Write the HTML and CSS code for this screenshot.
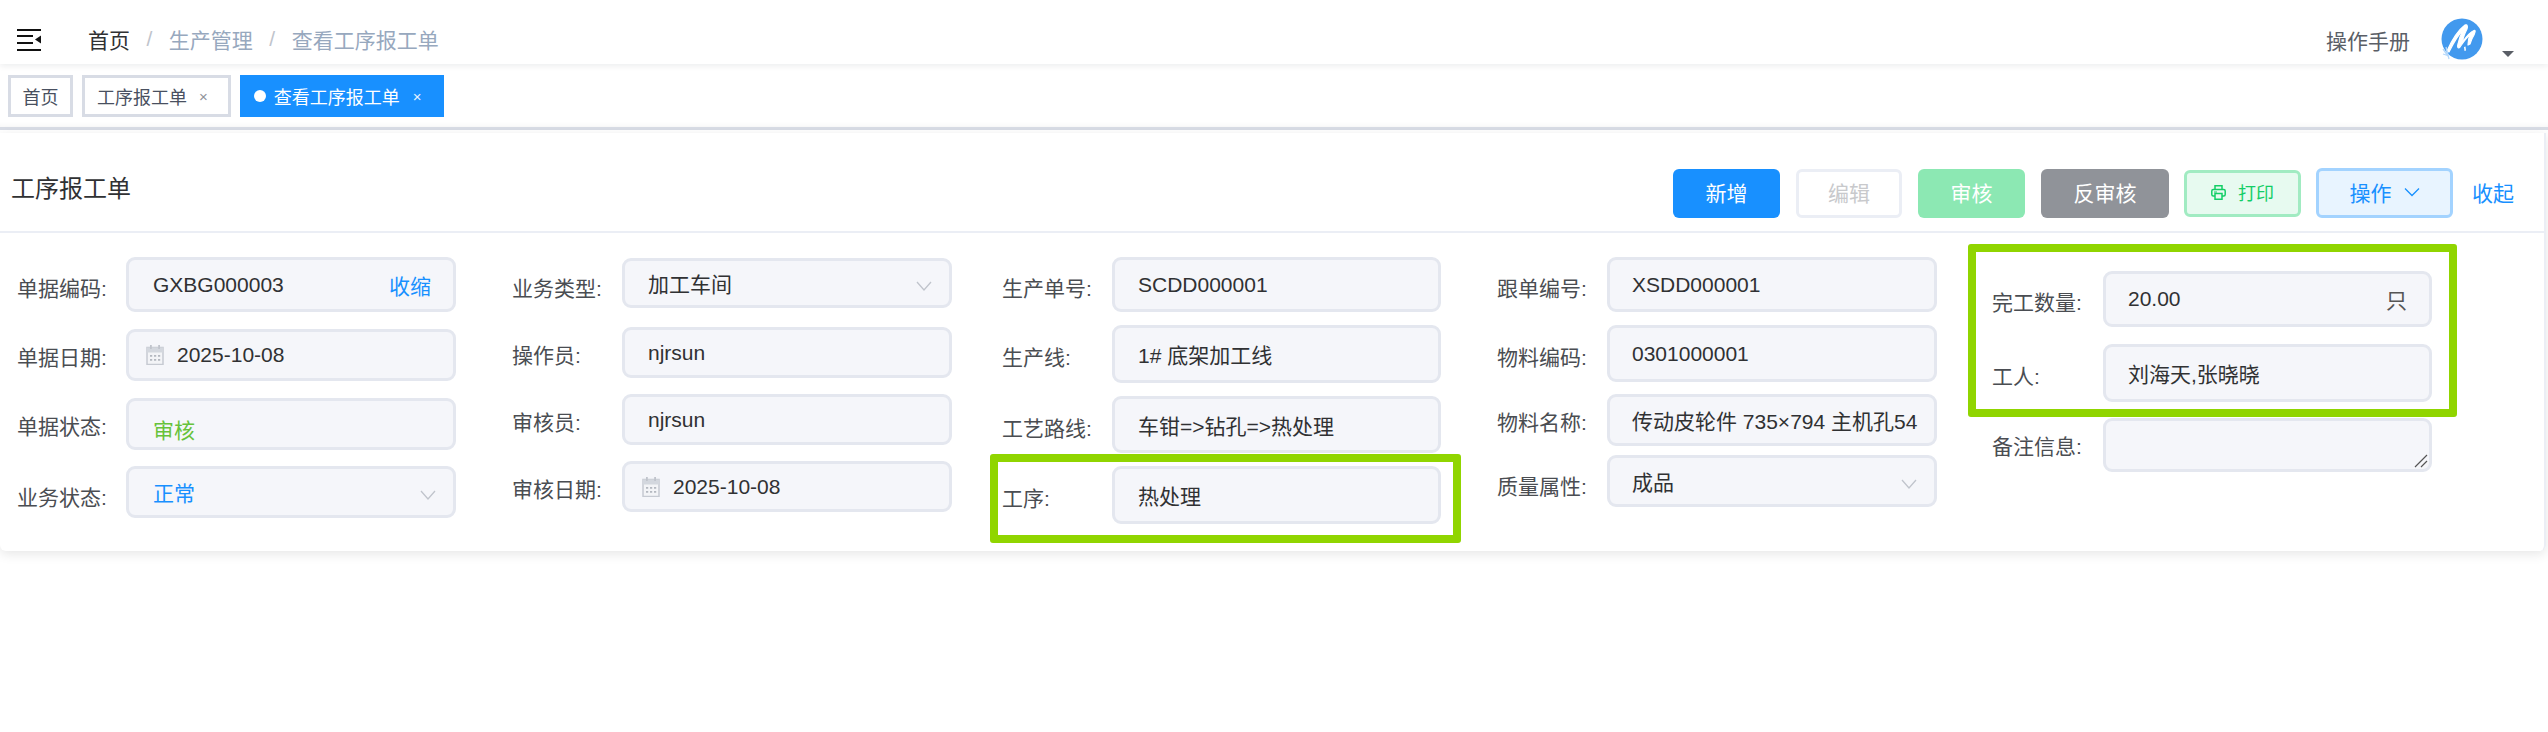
FILE: index.html
```html
<!DOCTYPE html>
<html lang="zh-CN">
<head>
<meta charset="utf-8">
<title>查看工序报工单</title>
<link rel="stylesheet" href="styles.css">
</head>
<body>
<header class="navbar">
  <svg class="hamburger" viewBox="0 0 24 22" aria-hidden="true">
    <path d="M0 0h24v2H0zM0 20h24v2H0zM0 6h16v2H0zM0 13h16v2H0z" fill="#111"/>
    <path d="M24 6.500v8l-6-4z" fill="#111"/>
  </svg>
  <nav class="crumbs">
    <span class="crumb-home">首页</span><span class="crumb-sep">/</span><span class="crumb">生产管理</span><span class="crumb-sep">/</span><span class="crumb">查看工序报工单</span>
  </nav>
  <div class="nav-right">
    <span class="manual">操作手册</span>
    <svg class="avatar" viewBox="0 0 42 42" aria-hidden="true">
      <circle cx="21" cy="21" r="20.500" fill="#4299ee"/>
      <path d="M6 33C10 24 16 13 24 7c2-1 3 1 2 4-2 4-4 8-4.500 13 3.500-5 7.500-10 11.500-11.500 2-.5 1 1.500 0 4.500-2 3-3 6-4 9l-2 1c0-5 1-8 2-10-4 3-8 9-10 12-2 2-3 0-2-3 1-5 3-10 5-14-5 5-10 14-14 22z" fill="#fff" stroke="#fff" stroke-width="1.200" stroke-linejoin="round"/>
      <path d="M23 29l1.500-.5.5 4-1.500.5z" fill="#fff"/>
      <path d="M2 31l5 7M5 29l3 12M2 36l6 2" fill="none" stroke="#b5d8fa" stroke-width="1.300"/>
    </svg>
    <span class="caret"></span>
  </div>
</header>

<div class="tags">
  <a class="tag">首页</a>
  <a class="tag tag-close">工序报工单<span class="tag-x">×</span></a>
  <a class="tag tag-active"><span class="dot"></span>查看工序报工单<span class="tag-x">×</span></a>
</div>

<main class="card">
  <div class="card-head">
    <h1 class="card-title">工序报工单</h1>
    <div class="actions">
      <button class="btn btn-primary">新增</button>
      <button class="btn btn-disabled">编辑</button>
      <button class="btn btn-green">审核</button>
      <button class="btn btn-gray">反审核</button>
      <button class="btn btn-print">
        <svg class="print-icon" viewBox="0 0 15 15" aria-hidden="true"><path d="M4 4.500V.8h7v3.700M4 11H2.300Q.8 11 .8 9.500V6Q.8 4.500 2.300 4.500h10.400Q14.200 4.500 14.200 6v3.500q0 1.500-1.500 1.500H11M4 8.500h7v5.700H4z" fill="none" stroke="#13ce66" stroke-width="1.500"/><path d="M3 6.500h3v1H3z" fill="#13ce66"/></svg>打印
      </button>
      <button class="btn btn-op">操作
        <svg class="chev-op" viewBox="0 0 16 10" aria-hidden="true"><path d="M1 1.500l7 7 7-7" fill="none" stroke="#1890ff" stroke-width="1.300"/></svg>
      </button>
      <a class="collapse">收起</a>
    </div>
  </div>

  <div class="form">
    <section class="col col-1">
      <div class="field"><label class="lab">单据编码:</label><div class="box h55">GXBG000003<span class="box-link">收缩</span></div></div>
      <div class="field"><label class="lab lab-hi">单据日期:</label><div class="box h52 date"><svg class="cal" viewBox="0 0 18 20" aria-hidden="true"><path d="M1 2.500h16v17H1z" fill="#f3f4f7" stroke="#c6cad2" stroke-width="1.500"/><path d="M1 2.500h16v5H1z" fill="#d3d7de"/><path d="M4 0h1.800v4H4zM12.200 0H14v4h-1.800z" fill="#c0c4cc"/><path d="M4 10h2.200v1.800H4zM8 10h2.200v1.800H8zM12 10h2.200v1.800H12zM4 14h2.200v1.800H4zM8 14h2.200v1.800H8zM12 14h2.200v1.800H12z" fill="#b4b8c0"/></svg>2025-10-08</div></div>
      <div class="field"><label class="lab lab-hi">单据状态:</label><div class="box h52 status"><span class="green-text">审核</span></div></div>
      <div class="field"><label class="lab lab-lo">业务状态:</label><div class="box h52"><span class="blue-text">正常</span><svg class="chev" viewBox="0 0 16 10" aria-hidden="true"><path d="M1 1l7 8 7-8" fill="none" stroke="#c0c4cc" stroke-width="1.300"/></svg></div></div>
    </section>

    <section class="col col-2">
      <div class="field"><label class="lab lab-lo">业务类型:</label><div class="box h50">加工车间<svg class="chev" viewBox="0 0 16 10" aria-hidden="true"><path d="M1 1l7 8 7-8" fill="none" stroke="#c0c4cc" stroke-width="1.300"/></svg></div></div>
      <div class="field"><label class="lab lab-hi">操作员:</label><div class="box h51">njrsun</div></div>
      <div class="field"><label class="lab lab-hi">审核员:</label><div class="box h51">njrsun</div></div>
      <div class="field"><label class="lab lab-hi">审核日期:</label><div class="box h51 date"><svg class="cal" viewBox="0 0 18 20" aria-hidden="true"><path d="M1 2.500h16v17H1z" fill="#f3f4f7" stroke="#c6cad2" stroke-width="1.500"/><path d="M1 2.500h16v5H1z" fill="#d3d7de"/><path d="M4 0h1.800v4H4zM12.200 0H14v4h-1.800z" fill="#c0c4cc"/><path d="M4 10h2.200v1.800H4zM8 10h2.200v1.800H8zM12 10h2.200v1.800H12zM4 14h2.200v1.800H4zM8 14h2.200v1.800H8zM12 14h2.200v1.800H12z" fill="#b4b8c0"/></svg>2025-10-08</div></div>
    </section>

    <section class="col col-3">
      <div class="field"><label class="lab">生产单号:</label><div class="box h55">SCDD000001</div></div>
      <div class="field"><label class="lab">生产线:</label><div class="box h58">1# 底架加工线</div></div>
      <div class="field"><label class="lab">工艺路线:</label><div class="box h57">车钳=&gt;钻孔=&gt;热处理</div></div>
      <div class="field"><label class="lab">工序:</label><div class="box h58">热处理</div></div>
    </section>

    <section class="col col-4">
      <div class="field"><label class="lab">跟单编号:</label><div class="box h55">XSDD000001</div></div>
      <div class="field"><label class="lab">物料编码:</label><div class="box h57">0301000001</div></div>
      <div class="field"><label class="lab lab-hi">物料名称:</label><div class="box h52 clip">传动皮轮件 735×794 主机孔54</div></div>
      <div class="field"><label class="lab lab-lo">质量属性:</label><div class="box h52">成品<svg class="chev" viewBox="0 0 16 10" aria-hidden="true"><path d="M1 1l7 8 7-8" fill="none" stroke="#c0c4cc" stroke-width="1.300"/></svg></div></div>
    </section>

    <section class="col col-5">
      <div class="field"><label class="lab">完工数量:</label><div class="box h56">20.00<span class="unit">只</span></div></div>
      <div class="field"><label class="lab">工人:</label><div class="box h58">刘海天,张晓晓</div></div>
      <div class="field"><label class="lab lab-mid">备注信息:</label><div class="box h54"><svg class="grip" viewBox="0 0 14 14" aria-hidden="true"><path d="M13 1L1 13M13 7l-6 6" stroke="#555" stroke-width="1.200" fill="none"/></svg></div></div>
    </section>

    <div class="mark mark-a"></div>
    <div class="mark mark-b"></div>
  </div>
</main>
</body>
</html>
```
FILE: styles.css
```css
* { box-sizing: border-box; }
html, body { margin: 0; padding: 0; }
body {
  width: 2548px;
  height: 732px;
  overflow: hidden;
  background: #fff;
  font-family: "Liberation Sans", "Noto Sans CJK SC", sans-serif;
  font-size: 21px;
  color: #303133;
}

/* top bar */
.navbar {
  height: 64px;
  display: flex;
  align-items: center;
  padding-left: 17px;
  box-shadow: 0 2px 6px rgba(0, 21, 41, 0.08);
  position: relative;
}
.hamburger { width: 24px; height: 22px; margin-top: 16px; }
.crumbs { margin-left: 47px; margin-top: 13px; display: flex; align-items: center; }
.crumb-home { color: #303133; }
.crumb { color: #97a8be; }
.crumb-sep { color: #c0c4cc; margin: 0 16.5px; }
.nav-right { margin-left: auto; display: flex; align-items: flex-start; height: 100%; }
.manual { color: #5a5e66; margin-top: 30px; line-height: 24px; }
.avatar { width: 42px; height: 42px; margin: 18px 0 0 31px; }
.caret {
  width: 0; height: 0;
  margin: 51px 34px 0 19px;
  border-left: 6px solid transparent;
  border-right: 6px solid transparent;
  border-top: 6px solid #5a5e66;
}

/* tag strip */
.tags {
  height: 66px;
  padding: 11px 8px 0;
  display: flex;
  gap: 9px;
  align-items: flex-start;
  border-bottom: 3px solid #d8dce5;
  box-shadow: inset 0 -6px 6px -6px rgba(0, 0, 0, 0.06);
}
.tag {
  height: 42px;
  display: flex;
  align-items: center;
  padding: 0 11.5px;
  border: 3px solid #d8dce5;
  font-size: 18px;
  color: #495060;
  background: #fff;
}
.tag-close { padding: 0 20px 0 12px; }
.tag-x { font-size: 15px; margin-left: 12px; color: #909399; }
.tag-active { background: #1890ff; border-color: #1890ff; color: #fff; padding: 0 19px 0 11px; }
.tag-active .tag-x { color: #e6f2ff; margin-left: 13px; }
.dot { width: 12px; height: 12px; border-radius: 50%; background: #fff; margin-right: 8px; }

/* card */
.card {
  margin-top: 3px;
  width: 2546px;
  height: 418px;
  border-radius: 0 0 6px 6px;
  box-shadow: 0 3px 12px rgba(0, 0, 0, 0.1);
  border-right: 2px solid #ebeef5;
}
.card-head {
  height: 100px;
  border-bottom: 2px solid #ebeef5;
  display: flex;
  align-items: flex-start;
  padding-left: 11px;
}
.card-title { margin: 39px 0 0; font-weight: 400; font-size: 24px; line-height: 34px; color: #303133; }
.actions { margin-left: auto; display: flex; align-items: center; gap: 16px; height: 50px; margin-top: 35px; padding-right: 30px; }
.btn {
  height: 49px;
  margin-top: 1px;
  padding: 0 0 3px;
  border: 0;
  border-radius: 6px;
  font: inherit;
  width: 107px;
  display: flex;
  align-items: center;
  justify-content: center;
}
.btn-primary { background: #1890ff; color: #fff; }
.btn-disabled { background: #fff; border: 3px solid #ebeef5; color: #c8c9cc; width: 106px; }
.btn-green { background: #8ce8b3; color: #fff; }
.btn-gray { background: #909399; color: #fff; width: 128px; }
.btn-print { background: #e7faf0; border: 3px solid #a1ebc2; color: #13ce66; width: 117px; height: 47px; font-size: 18px; margin-left: -1px; }
.print-icon { width: 15px; height: 15px; margin-right: 12px; }
.btn-op { background: #e8f4ff; border: 3px solid #a3d3ff; color: #1890ff; width: 137px; height: 50px; margin-top: 0; margin-left: -1px; }
.chev-op { width: 16px; height: 10px; margin-left: 12px; }
.collapse { color: #1890ff; margin: 0 0 3px 3px; }

/* form */
.form {
  position: relative;
  display: grid;
  grid-template-columns: 495px 490px 495px 495px 440px;
  padding-left: 17px;
}
.col { display: grid; align-content: start; align-items: start; }
.col-1 { padding-top: 24px; grid-template-rows: 72px 69px 68px 52px; }
.col-2 { padding-top: 25px; grid-template-rows: 69px 67px 67px 51px; }
.col-3 { padding-top: 24px; grid-template-rows: 68px 71px 70px 58px; }
.col-4 { padding-top: 24px; grid-template-rows: 68px 69px 61px 52px; }
.col-5 { padding-top: 38px; grid-template-rows: 73px 74px 54px; }

.field { display: flex; align-items: stretch; }
.lab {
  width: 110px;
  flex: none;
  display: flex;
  align-items: center;
  padding-top: 4px;
  color: #4a4d52;
}
.lab-hi { padding-top: 2px; }
.lab-lo { padding-top: 7px; }
.lab-mid { padding-top: 0; }
.col-1 .lab { width: 109px; }
.col-5 .lab { width: 111px; }
.box {
  width: 330px;
  flex: none;
  display: flex;
  align-items: center;
  position: relative;
  background: #f5f6fa;
  border: 3px solid #e4e7ef;
  border-radius: 9px;
  padding: 0 24px;
  color: #303133;
  white-space: nowrap;
  overflow: hidden;
}
.col-2 .box { padding-left: 23px; }
.col-3 .box { padding-left: 23px; width: 329px; }
.col-4 .box { padding-left: 22px; }
.col-5 .box { padding-left: 22px; width: 329px; }
.h50 { height: 50px; }
.h51 { height: 51px; }
.h52 { height: 52px; }
.h54 { height: 54px; }
.h55 { height: 55px; }
.h56 { height: 56px; }
.h57 { height: 57px; }
.h58 { height: 58px; }
.box-link { margin-left: auto; margin-right: -2px; color: #1890ff; }
.col-1 .date, .col-2 .date { padding-left: 17px; }
.cal { width: 18px; height: 20px; margin-right: 13px; flex: none; }
.status { padding-top: 10px; }
.green-text { color: #67c23a; }
.blue-text { color: #1890ff; }
.chev { width: 16px; height: 10px; margin: 5px -7px 0 auto; flex: none; }
.unit { margin-left: auto; margin-right: -2px; color: #555; }
.clip { padding-right: 8px; }
.grip { position: absolute; right: 1px; bottom: 1px; width: 14px; height: 14px; }

/* green review highlights laid over the form */
.mark { position: absolute; border: 8px solid #90d500; border-radius: 3px; pointer-events: none; }
.mark-a { left: 990px; top: 221px; width: 471px; height: 89px; }
.mark-b { left: 1968px; top: 11px; width: 489px; height: 173px; }
```
